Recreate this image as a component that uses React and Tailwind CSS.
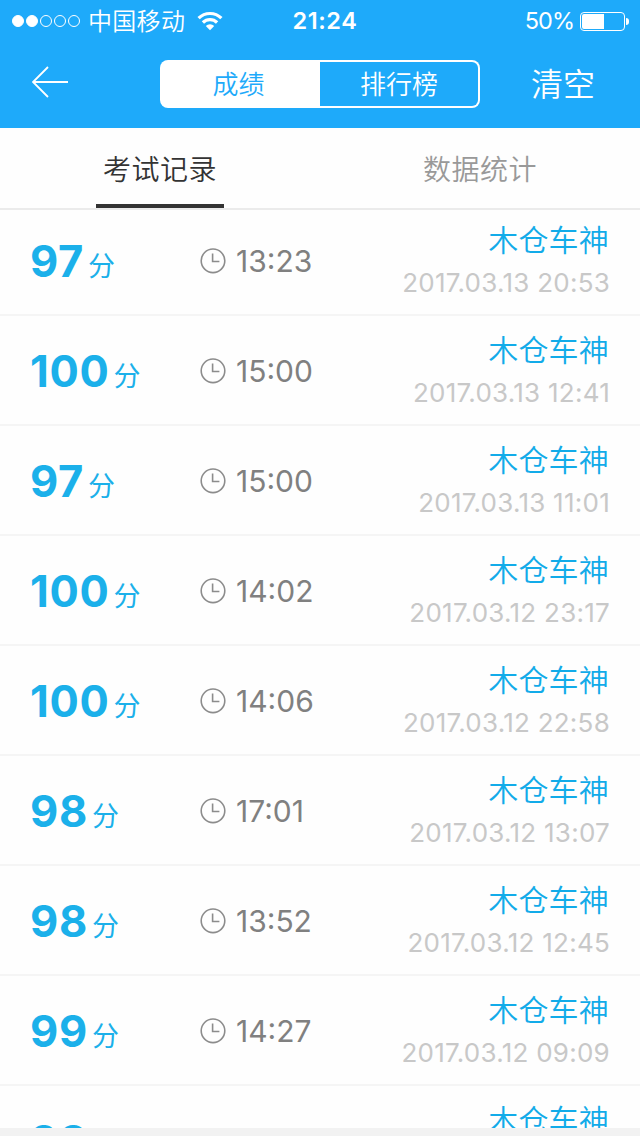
import React from 'react';

const RECORDS = [
  { score: 97, time: '13:23', date: '2017.03.13 20:53' },
  { score: 100, time: '15:00', date: '2017.03.13 12:41' },
  { score: 97, time: '15:00', date: '2017.03.13 11:01' },
  { score: 100, time: '14:02', date: '2017.03.12 23:17' },
  { score: 100, time: '14:06', date: '2017.03.12 22:58' },
  { score: 98, time: '17:01', date: '2017.03.12 13:07' },
  { score: 98, time: '13:52', date: '2017.03.12 12:45' },
  { score: 99, time: '14:27', date: '2017.03.12 09:09' },
  { score: 98, time: '14:35', date: '2017.03.12 08:51' },
];

const ClockIcon = () => (
  <svg width="26" height="26" viewBox="0 0 26 26" fill="none" stroke="#8c8c8c">
    <circle cx="13" cy="12.8" r="11.8" strokeWidth="1.6" />
    <path d="M12.6 5.5v8h6.8" strokeWidth="1.6" />
  </svg>
);

const WifiIcon = () => (
  <svg width="26" height="20" viewBox="0 0 26 20" fill="none" stroke="#fff" strokeWidth="3.2">
    <path d="M1.6 7.2a16.2 16.2 0 0 1 22.8 0" />
    <path d="M5.9 11.5a10 10 0 0 1 14.2 0" />
    <path d="M13 19.2l-4.2-4.3a6 6 0 0 1 8.4 0z" fill="#fff" stroke="none" />
  </svg>
);

const StatusBar = () => (
  <div className="grid h-10 grid-cols-3 items-center pr-[11px] pl-3 text-white">
    <div className="flex h-10 items-center">
      <div className="flex gap-[2px]">
        {[true, true, false, false, false].map((on, i) => (
          <span
            key={i}
            className={`size-3 rounded-full border border-white ${on ? 'bg-white' : ''}`}
          />
        ))}
      </div>
      <span className="ml-2 pt-[2px] text-[24px] leading-10 font-[350] tracking-[0.3px] whitespace-nowrap">中国移动</span>
      <span className="ml-3">
        <WifiIcon />
      </span>
    </div>
    <div className="pl-[9px] text-center text-[23.5px] leading-[42px] font-semibold tracking-[0.6px]">21:24</div>
    <div className="flex h-10 items-center justify-end">
      <span className="mr-[6px] text-[23.5px] leading-[42px] tracking-[-1px]">50%</span>
      <span className="flex h-[19px] w-[45px] rounded-[4px] border border-white p-px">
        <span className="w-[22px] rounded-l-[2px] bg-white" />
      </span>
      <span className="ml-px h-[7px] w-[3px] rounded-r-full bg-white" />
    </div>
  </div>
);

const NavBar = () => (
  <div className="flex h-[88px] items-center pr-[45px] pl-8 font-[350] text-white">
    <svg width="37" height="32" viewBox="0 0 37 32" fill="none" stroke="#fff" strokeWidth="1.8" className="mb-1">
      <path d="M16 1L1 16l15 15M1 16h35" />
    </svg>
    <div className="ml-[91px] flex h-12 w-80 rounded-[8px] bg-white p-[2px] text-[26px] leading-[46px]">
      <button className="w-[158px] pr-[5px] text-[#1eaafa]">成绩</button>
      <button className="flex-1 rounded-r-[6px] bg-[#1eaafa]">排行榜</button>
    </div>
    <button className="ml-auto pt-[2px] text-[32px] leading-[86px]">清空</button>
  </div>
);

const Tabs = () => (
  <div className="flex h-[82px] shrink-0 border-b-2 border-[#ebebeb] text-[28px] leading-[84px] font-[350] tracking-[0.5px]">
    <div className="flex flex-1 justify-center">
      <div className="h-20 w-32 border-b-4 border-[#333] text-center text-[#333]">考试记录</div>
    </div>
    <div className="flex-1 text-center text-[#999]">数据统计</div>
  </div>
);

const RecordRow = ({ score, time, date }) => (
  <li className="flex h-[110px] items-center border-b-2 border-[#f5f5f5] pr-[30px] pl-[30px]">
    <div className="flex w-[170px] items-baseline pt-[2px] text-[#1bb0ea]">
      <span className="text-[43.5px] leading-[60px] font-bold tracking-[0.7px]">{score}</span>
      <span className="relative -top-px ml-1 text-[27px]">分</span>
    </div>
    <div className="flex items-center pt-[2px] text-[#808080]">
      <ClockIcon />
      <span className="ml-[10px] text-[30px] leading-10">{time}</span>
    </div>
    <div className="ml-auto text-right">
      <p className="pt-[2px] pr-px text-[30px] leading-[43px] font-[350] tracking-[0.2px] text-[#12abe9]">木仓车神</p>
      <p className="text-[26px] leading-[42px] tracking-[0.25px] text-[#c8c8c8]">{date}</p>
    </div>
  </li>
);

const App = () => (
  <div className="flex h-[1136px] w-[640px] flex-col overflow-hidden bg-[#f2f2f2] font-['Inter','Noto_Sans_CJK_SC',sans-serif]">
    <header className="shrink-0 bg-[#1eaafa]">
      <StatusBar />
      <NavBar />
    </header>
    <main className="flex h-[1000px] flex-col bg-[#fefefe]">
      <Tabs />
      <div className="flex-1 overflow-hidden">
        {/* list is scrolled slightly under the tabs */}
        <ul className="-mt-1">
          {RECORDS.map((record) => (
            <RecordRow key={record.date} {...record} />
          ))}
        </ul>
      </div>
    </main>
  </div>
);

export default App;
